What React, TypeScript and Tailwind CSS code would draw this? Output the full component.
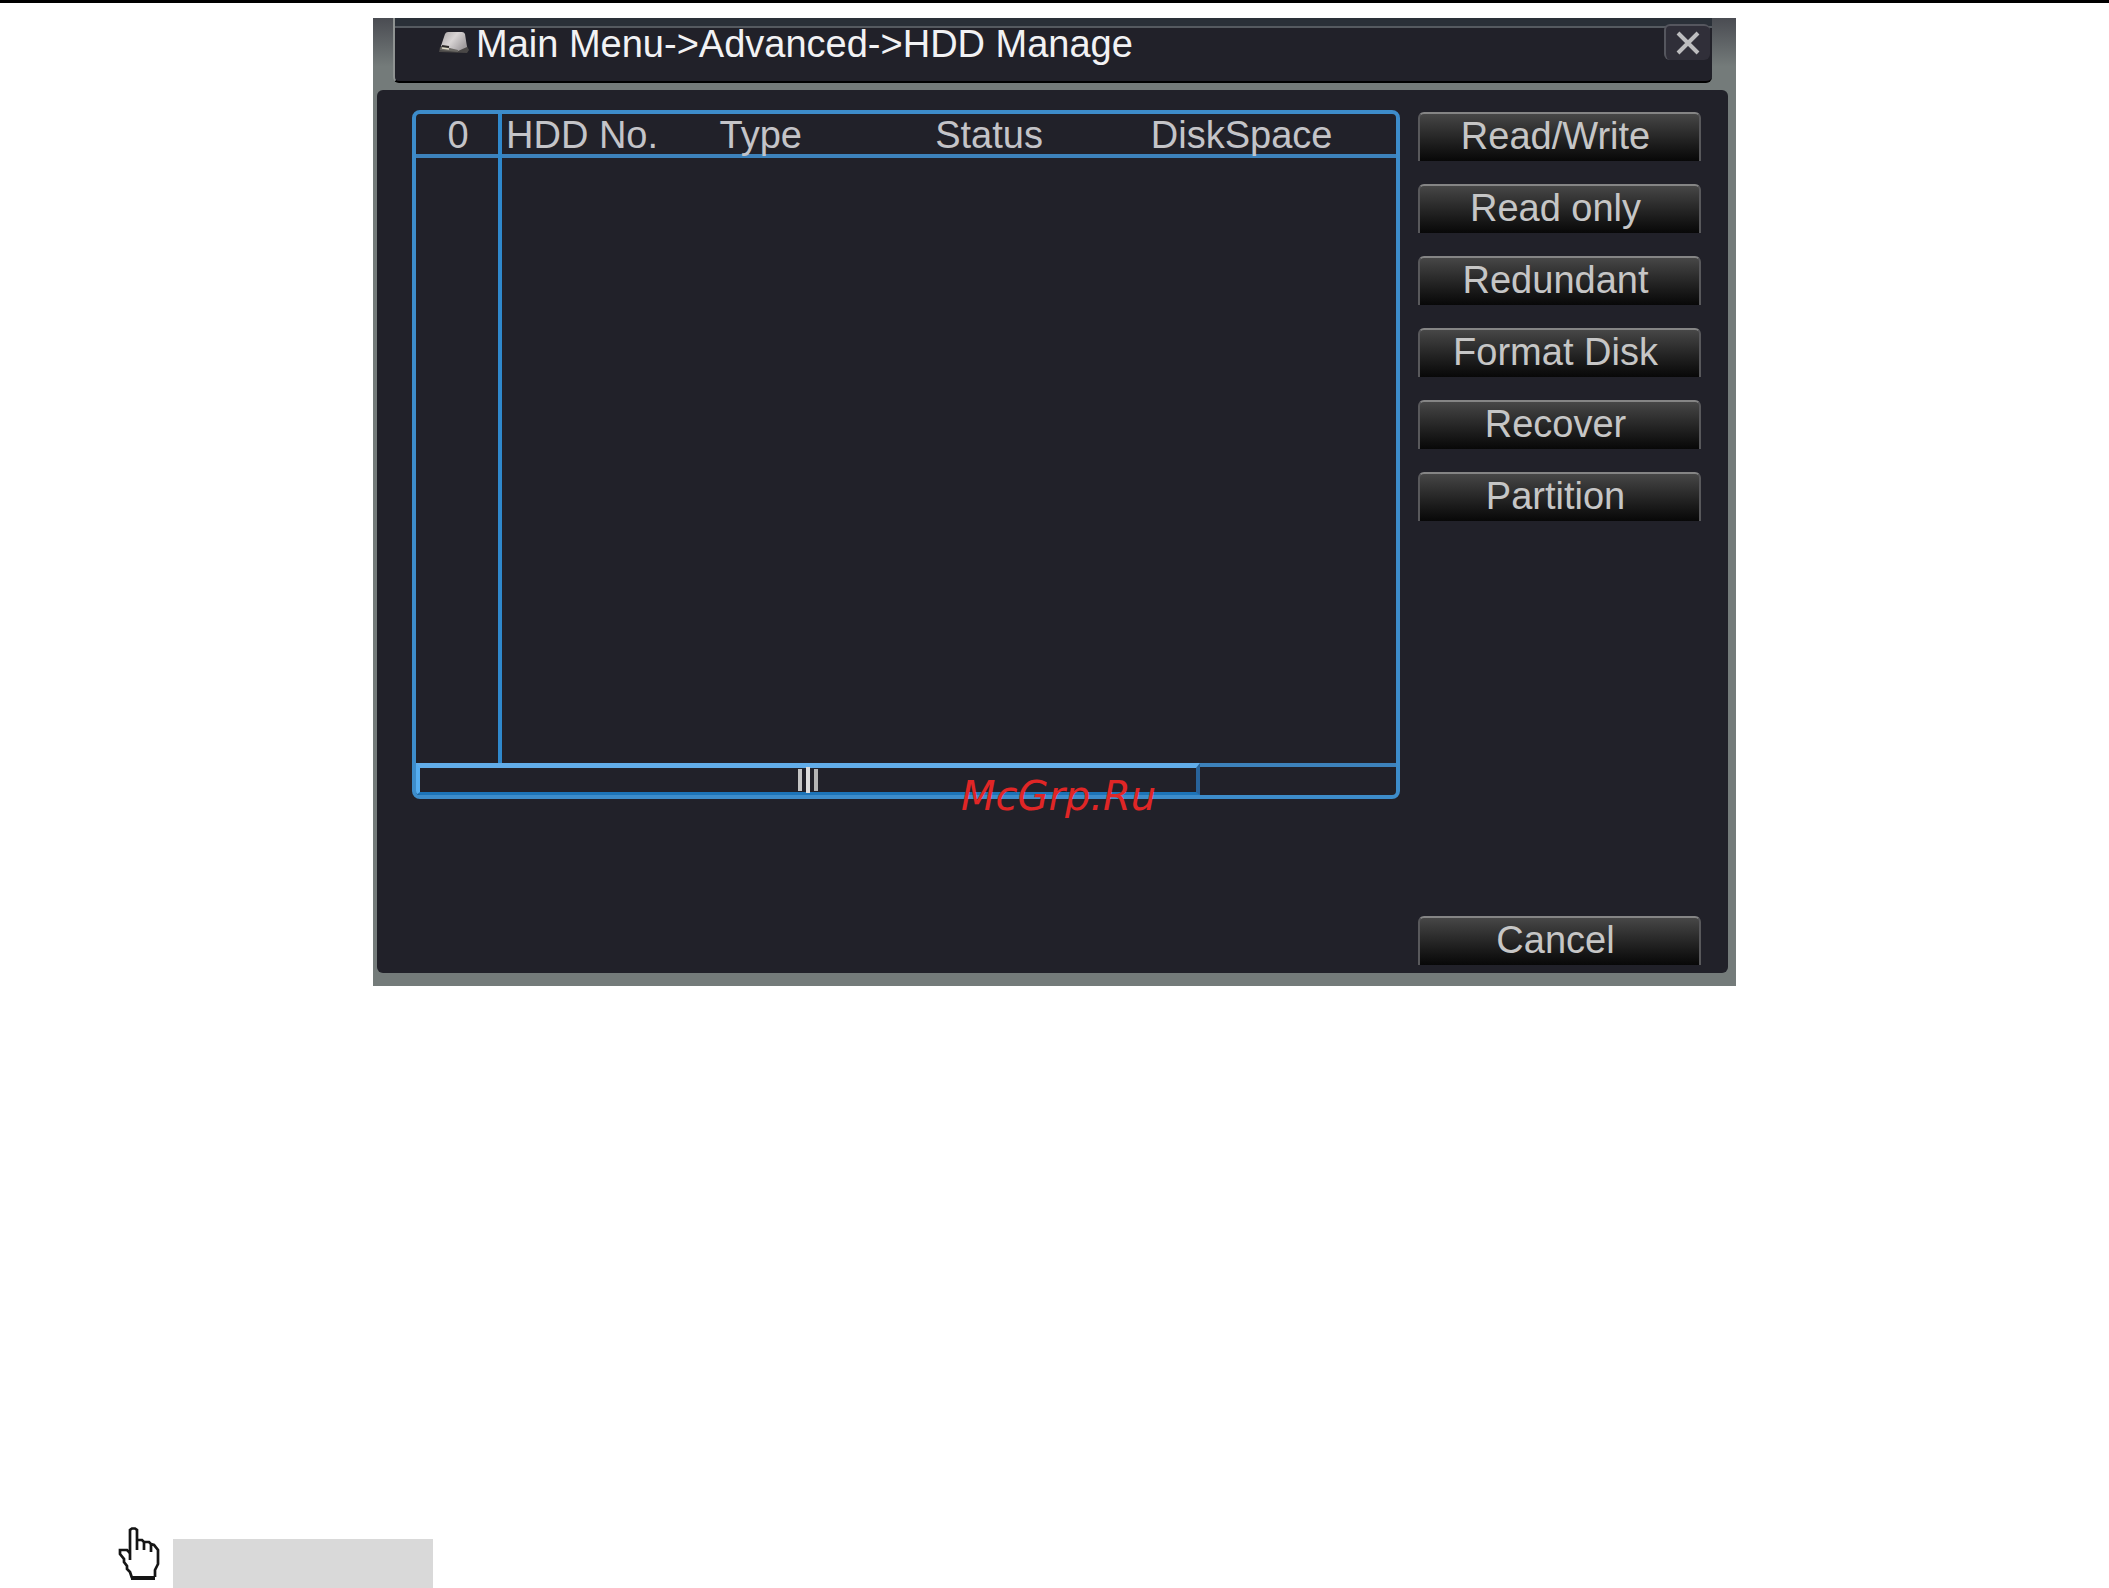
import React from "react";

const columns = [
  { name: "HDD No.", width: "w-[22%]" },
  { name: "Type", width: "w-[22%]" },
  { name: "Status", width: "w-[22%]" },
  { name: "DiskSpace", width: "w-auto" },
];
const actions = [
  "Read/Write",
  "Read only",
  "Redundant",
  "Format Disk",
  "Recover",
  "Partition",
];

function DiskIcon() {
  return (
    <svg className="h-6 w-8 shrink-0" viewBox="0 0 32 24" aria-hidden="true">
      <defs>
        <linearGradient id="disk" x1="0" y1="0" x2="1" y2="0.6">
          <stop offset="0" stopColor="#a8a4a4" />
          <stop offset="0.5" stopColor="#d8d4d4" />
          <stop offset="1" stopColor="#a09c9e" />
        </linearGradient>
      </defs>
      <path d="M1 22 L2 17 L20 18 L28 14 L31 20 L29 23 Z" fill="#4a4847" />
      <path d="M7 4 Q8 2 10 2 L24 2 Q26 2 27 4 L29 17 L20 21 L3 16 Z" fill="url(#disk)" />
      <path d="M3 16 L20 20 L20 22 L2 20 Z" fill="#6a6864" />
      <path d="M4 16 L11 17" stroke="#2c2a28" strokeWidth="2" />
      <path d="M4 18 L11 19" stroke="#e0dcc8" strokeWidth="1.500" />
    </svg>
  );
}

function HandIcon() {
  return (
    <svg
      className="h-[53px] w-[42px] shrink-0"
      viewBox="0 0 42 53"
      fill="none"
      stroke="#151515"
      strokeWidth="2.700"
      aria-hidden="true"
    >
      <path d="M12 33 V3 L14 1.500 H17 L19 3 V23 M19 13 H24 L26 15 V23 M26 15 H31 L33 17 V25 M33 17 L36 18 L40 23 V37 L37 43 V50" />
      <path d="M12 26 L9 23 H2 V27 L6 32 V35 L9 39 V42 L12 45 L14 51" />
      <path d="M13 51 H37" strokeWidth="4" />
    </svg>
  );
}

function MenuButton({ label }: { label: string }) {
  return (
    <button
      type="button"
      className="h-[49px] w-full rounded-t-md border-x-2 border-t-2 border-x-[#58585b] border-t-[#858585] bg-linear-to-b from-[#474747] via-[#262626] to-[#080808] pr-2 pb-1 text-[38px] leading-[38px] text-[#c6c6c6]"
    >
      {label}
    </button>
  );
}

export default function App() {
  return (
    <div className="flex min-h-screen flex-col border-t-[3px] border-black bg-white font-['Liberation_Sans',Arial,sans-serif]">
      <main className="mx-auto mt-[15px] w-full max-w-[1363px] bg-linear-to-b from-[#4a4c52] via-[#747b7a] via-5% to-[#747b7a] pr-2 pb-[13px] pl-1">
        <header className="mr-4 ml-4 flex h-[65px] flex-col rounded-b-md border-b-2 border-l-2 border-b-black border-l-[#8f9392] bg-[#212129]">
          <div className="h-[10px] shrink-0 border-b-2 border-[#555a60] bg-[#2a3038]" />
          <div className="-mt-1 flex h-[36px] items-center pr-[2px] pl-[43px]">
            <DiskIcon />
            <h1 className="ml-[6px] pt-1 text-[38px] leading-[36px] text-[#f2f2f4]">
              Main Menu-&gt;Advanced-&gt;HDD Manage
            </h1>
            <button
              type="button"
              aria-label="Close"
              className="ml-auto flex h-9 w-[46px] items-center justify-center rounded-md border-t-2 border-l-2 border-[#55565e] bg-[#302f39]"
            >
              <svg className="h-6 w-6" viewBox="0 0 24 24" stroke="#bdbdbf" strokeWidth="4" aria-hidden="true">
                <path d="M2 2 L22 22 M22 2 L2 22" />
              </svg>
            </button>
          </div>
        </header>

        <section className="mt-[7px] flex gap-[18px] rounded-md bg-[#212129] pt-5 pr-[27px] pb-2 pl-[35px]">
          <div className="relative h-[689px] min-w-0 flex-1">
            <div className="flex h-full flex-col overflow-hidden rounded-lg border-4 border-[#3d8cca]">
              <table className="w-full flex-1 table-fixed border-collapse text-left text-[38px] leading-[38px] text-[#c4c4c8]">
                <thead>
                  <tr className="h-[42px] border-b-4 border-[#3d82bb]">
                    <th className="w-[84px] border-r-4 border-[#2f88cc] p-0 pt-[2px] pl-[2px] text-center font-normal">0</th>
                    {columns.map((column) => (
                      <th key={column.name} className={`${column.width} p-0 pt-[2px] pl-1 font-normal`}>
                        {column.name}
                      </th>
                    ))}
                  </tr>
                </thead>
                <tbody>
                  <tr>
                    <td className="border-r-4 border-[#2f88cc]" />
                    <td colSpan={4} />
                  </tr>
                </tbody>
              </table>
              <div className="flex h-8 shrink-0 border-t-4 border-[#3d82bb]">
                <div className="-mt-1 flex w-4/5 items-center justify-center gap-1 border-t-[5px] border-r-4 border-b-[3px] border-l-4 border-t-[#62ade9] border-r-[#28639a] border-b-[#1c74b8] border-l-[#55adf0]">
                  <span className="h-[22px] w-1 bg-[#c4c4c4]" />
                  <span className="h-[26px] w-1 bg-[#dcdcdc]" />
                  <span className="h-[22px] w-1 bg-[#b4b4b4]" />
                </div>
              </div>
            </div>
            <span className="absolute bottom-[-19px] left-[549px] font-['DejaVu_Sans',sans-serif] text-[40px] leading-[44px] text-[#e02626] italic">
              McGrp.Ru
            </span>
          </div>

          <nav className="flex h-[855px] w-[283px] shrink-0 flex-col gap-[23px] pt-[2px]">
            {actions.map((label) => (
              <MenuButton key={label} label={label} />
            ))}
            <div className="mt-auto">
              <MenuButton label="Cancel" />
            </div>
          </nav>
        </section>
      </main>

      <footer className="mt-auto flex items-end gap-[13px] pl-[118px]">
        <div className="pb-2">
          <HandIcon />
        </div>
        <div className="h-[49px] w-[260px] bg-[#d9d9d9]" />
      </footer>
    </div>
  );
}
